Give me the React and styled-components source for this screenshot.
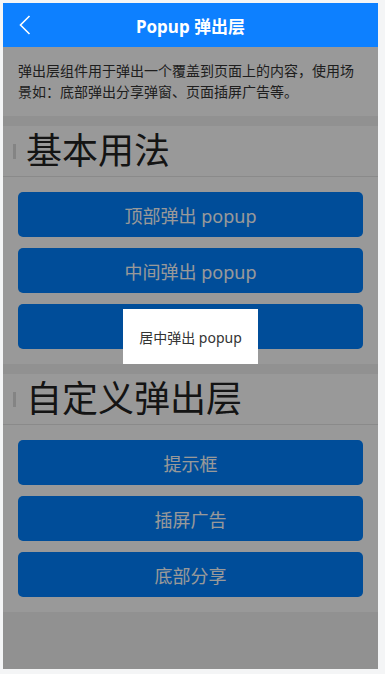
import React from "react";
import styled, { createGlobalStyle } from "styled-components";

const Global = createGlobalStyle`
  html, body { margin: 0; padding: 0; background: #f4f5f6; }
  body { padding: 3px 7px 0 3px; }
  * { box-sizing: border-box; }
`;

const Frame = styled.div`
  position: relative;
  width: 375px;
  height: 666px;
  overflow: hidden;
  background: #f2f2f2;
  display: flex;
  flex-direction: column;
  font-family: "Noto Sans", "Noto Sans CJK SC", sans-serif;
  color: #333;
`;

const Header = styled.header`
  position: relative;
  z-index: 3;
  height: 44px;
  flex: none;
  background: #0d80ff;
  display: flex;
  align-items: center;
  justify-content: center;
`;

const Back = styled.button`
  position: absolute;
  left: 10px;
  top: 10px;
  width: 24px;
  height: 24px;
  padding: 0;
  border: 0;
  background: none;
  display: flex;
  align-items: center;
  justify-content: center;
`;

const Title = styled.h1`
  margin: 0;
  color: #fff;
  font-size: 17px;
  font-weight: 700;
`;

const Desc = styled.p`
  margin: 0;
  background: #fff;
  padding: 13px 15px 14px;
  font-size: 14px;
  line-height: 21px;
  color: #333;
`;

const Card = styled.section`
  margin-top: 10px;
  background: #fff;
`;

const SectionHead = styled.div`
  height: 51px;
  border-bottom: 1px solid #e6e6e6;
  display: flex;
  align-items: center;
  padding-left: 10px;
  gap: 10px;
`;

const Bar = styled.span`
  width: 3px;
  height: 15px;
  background: #ddd;
`;

const SectionTitle = styled.h2`
  margin: 0;
  font-size: 36px;
  font-weight: 400;
  line-height: 50px;
  color: #222;
`;

const Buttons = styled.div`
  padding: 15px;
  display: flex;
  flex-direction: column;
  gap: 11px;
`;

const Btn = styled.button`
  height: 45px;
  border: 0;
  border-radius: 5px;
  background: #0081ff;
  color: #fff;
  font-family: inherit;
  font-size: 18px;
`;

const Mask = styled.div`
  position: absolute;
  left: 0;
  right: 0;
  top: 44px;
  bottom: 0;
  z-index: 2;
  background: rgba(0, 0, 0, 0.4);
`;

const Popup = styled.div`
  position: absolute;
  z-index: 4;
  left: 120px;
  top: 306px;
  width: 135px;
  height: 55px;
  background: #fff;
  display: flex;
  align-items: center;
  justify-content: center;
  font-size: 14px;
  color: #333;
`;

export default function App() {
  return (
    <>
      <Global />
      <Frame>
        <Header>
          <Back aria-label="back">
            <svg width="12" height="20" viewBox="0 0 12 20">
              <path d="M10.5 1 L1.5 10 L10.5 19" fill="none" stroke="#fff" strokeWidth="1.6" />
            </svg>
          </Back>
          <Title>Popup 弹出层</Title>
        </Header>
        <Desc>弹出层组件用于弹出一个覆盖到页面上的内容，使用场景如：底部弹出分享弹窗、页面插屏广告等。</Desc>
        <Card>
          <SectionHead>
            <Bar />
            <SectionTitle>基本用法</SectionTitle>
          </SectionHead>
          <Buttons>
            <Btn>顶部弹出 popup</Btn>
            <Btn>中间弹出 popup</Btn>
            <Btn>底部弹出 popup</Btn>
          </Buttons>
        </Card>
        <Card>
          <SectionHead>
            <Bar />
            <SectionTitle>自定义弹出层</SectionTitle>
          </SectionHead>
          <Buttons>
            <Btn>提示框</Btn>
            <Btn>插屏广告</Btn>
            <Btn>底部分享</Btn>
          </Buttons>
        </Card>
        <Mask />
        <Popup>居中弹出 popup</Popup>
      </Frame>
    </>
  );
}
